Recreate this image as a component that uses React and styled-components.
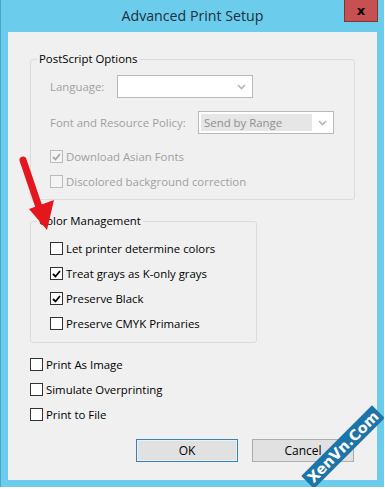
import React from 'react';
import styled, { createGlobalStyle } from 'styled-components';

const GlobalStyle = createGlobalStyle`
  html, body {
    margin: 0;
    padding: 0;
    background: #ffffff;
  }
  body {
    font-family: 'Open Sans', 'Noto Sans', sans-serif;
    font-size: 11.4px;
    color: #000;
  }
`;

const Window = styled.div`
  position: relative;
  width: 384px;
  height: 487px;
  box-sizing: border-box;
  background: #6bcdeb;
  border-left: 1px solid #4aa6c8;
  padding: 0 7px 7px 7px;
  display: flex;
  flex-flow: column nowrap;
  overflow: hidden;
`;

const TitleBar = styled.div`
  height: 32px;
  display: flex;
  align-items: center;
  justify-content: center;
  font-size: 14.2px;
  color: #1c2f40;
  padding-bottom: 1px;
  box-sizing: border-box;
`;

const CloseButton = styled.div`
  position: absolute;
  top: 0;
  right: 6px;
  width: 34px;
  height: 22px;
  box-sizing: border-box;
  background: #c75050;
  border: 1px solid #7d3434;
  border-top: none;
  display: flex;
  align-items: center;
  justify-content: center;
  color: #000;
  font-family: 'DejaVu Sans', sans-serif;
  font-weight: 700;
  font-size: 13px;
`;

const Client = styled.div`
  flex: 1;
  background: #f0f0f0;
  padding: 19px 22px 0 22px;
  display: flex;
  flex-flow: column nowrap;
`;

const Group = styled.fieldset`
  margin: 0;
  padding: ${(p) => p.$pad || '0'};
  width: ${(p) => p.$width}px;
  box-sizing: border-box;
  border: 1px solid #dcdcdc;
  border-radius: 3px;
  margin-bottom: ${(p) => p.$mb || 0}px;
  display: flex;
  flex-flow: column nowrap;
`;

const Legend = styled.legend`
  margin-left: 6px;
  padding: 0 2px;
  line-height: 16px;
  color: #000;
`;

const FieldRow = styled.div`
  display: flex;
  align-items: center;
  height: 23px;
  margin-top: ${(p) => p.$mt || 0}px;
  padding-left: 19px;
`;

const FieldLabel = styled.span`
  width: ${(p) => p.$w}px;
  color: #a0a0a0;
`;

const Combo = styled.div`
  width: ${(p) => p.$w}px;
  height: 23px;
  box-sizing: border-box;
  border: 1px solid #b9b9b9;
  background: #ffffff;
  display: flex;
  align-items: center;
  padding: 2px;
`;

const ComboText = styled.div`
  flex: 1;
  height: 100%;
  background: ${(p) => (p.$filled ? '#e6e6e6' : 'transparent')};
  color: #8f8f8f;
  display: flex;
  align-items: center;
  padding-left: 3px;
`;

const Chevron = styled.svg`
  width: 9px;
  height: 6px;
  margin: 0 4px 0 6px;
`;

const CheckRow = styled.label`
  display: flex;
  align-items: center;
  height: 25px;
  padding-left: ${(p) => p.$indent || 0}px;
  color: ${(p) => (p.$disabled ? '#a0a0a0' : '#000')};
`;

const Box = styled.span`
  width: 13px;
  height: 13px;
  box-sizing: border-box;
  border: 1px solid ${(p) => (p.$disabled ? '#bcbcbc' : '#333333')};
  background: ${(p) => (p.$disabled ? '#f4f4f4' : '#ffffff')};
  margin-right: 3px;
  display: flex;
  align-items: center;
  justify-content: center;
`;

const Buttons = styled.div`
  display: flex;
  justify-content: flex-end;
  gap: 14px;
  margin-top: 12px;
  padding-right: 1px;
`;

const Button = styled.div`
  width: 102px;
  height: 23px;
  box-sizing: border-box;
  background: #e1e1e1;
  border: 1px solid ${(p) => (p.$default ? '#3c7fb1' : '#adadad')};
  box-shadow: ${(p) => (p.$default ? 'inset 0 0 0 1px #e8f0f8' : 'none')};
  display: flex;
  align-items: center;
  justify-content: center;
  color: #000;
  font-size: 12px;
`;

const Overlay = styled.svg`
  position: absolute;
  left: 0;
  top: 0;
  pointer-events: none;
`;

const Watermark = styled.div`
  position: absolute;
  left: 292px;
  top: 438px;
  width: 100px;
  height: 18px;
  background: #1d74a8;
  color: #ffffff;
  font-family: 'DejaVu Sans', sans-serif;
  font-weight: 700;
  font-size: 14.5px;
  line-height: 18px;
  text-align: center;
  white-space: nowrap;
  transform: rotate(-45deg);
  pointer-events: none;
`;

function ChevronIcon() {
  return (
    <Chevron viewBox="0 0 9 6">
      <path d="M1 1 L4.5 4.5 L8 1" fill="none" stroke="#b5b5b5" strokeWidth="1.6" />
    </Chevron>
  );
}

function CheckBox({ label, checked, disabled, indent }) {
  return (
    <CheckRow $disabled={disabled} $indent={indent}>
      <Box $disabled={disabled}>
        {checked && (
          <svg width="9" height="8" viewBox="0 0 9 8">
            <path
              d="M1 4 L3.5 6.5 L8 1"
              fill="none"
              stroke={disabled ? '#a8a8a8' : '#000'}
              strokeWidth="1.8"
            />
          </svg>
        )}
      </Box>
      {label}
    </CheckRow>
  );
}

export default function App() {
  return (
    <>
      <GlobalStyle />
      <Window>
        <TitleBar>Advanced Print Setup</TitleBar>
        <CloseButton>x</CloseButton>
        <Client>
          <Group $width={325} $pad="0 0 5px 0" $mb={13}>
            <Legend>PostScript Options</Legend>
            <FieldRow $mt={8}>
              <FieldLabel $w={67}>Language:</FieldLabel>
              <Combo $w={136}>
                <ComboText />
                <ChevronIcon />
              </Combo>
            </FieldRow>
            <FieldRow $mt={13}>
              <FieldLabel $w={148}>Font and Resource Policy:</FieldLabel>
              <Combo $w={136}>
                <ComboText $filled>Send by Range</ComboText>
                <ChevronIcon />
              </Combo>
            </FieldRow>
            <div style={{ height: 10 }} />
            <CheckBox label="Download Asian Fonts" checked disabled indent={19} />
            <CheckBox label="Discolored background correction" disabled indent={19} />
          </Group>
          <Group $width={227} $pad="7px 0 6px 0" $mb={9}>
            <Legend>Color Management</Legend>
            <CheckBox label="Let printer determine colors" indent={19} />
            <CheckBox label="Treat grays as K-only grays" checked indent={19} />
            <CheckBox label="Preserve Black" checked indent={19} />
            <CheckBox label="Preserve CMYK Primaries" indent={19} />
          </Group>
          <CheckBox label="Print As Image" indent={-1} />
          <CheckBox label="Simulate Overprinting" indent={-1} />
          <CheckBox label="Print to File" indent={-1} />
          <Buttons>
            <Button $default>OK</Button>
            <Button>Cancel</Button>
          </Buttons>
        </Client>
        <Overlay width="384" height="487" viewBox="0 0 384 487">
          <line x1="22" y1="160" x2="39" y2="210" stroke="#e3171d" strokeWidth="7" strokeLinecap="round" />
          <polygon points="28,209 53,200 46,230" fill="#e3171d" />
        </Overlay>
        <Watermark>XenVn.Com</Watermark>
      </Window>
    </>
  );
}
